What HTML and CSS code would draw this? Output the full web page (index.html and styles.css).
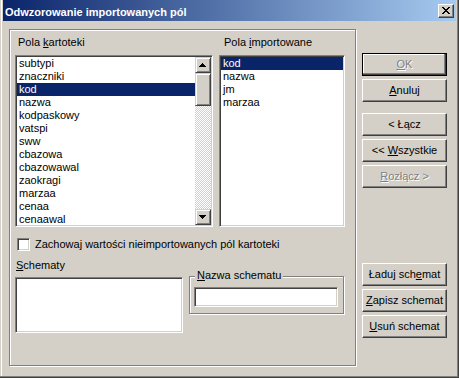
FILE: index.html
```html
<!DOCTYPE html>
<html lang="pl">
<head>
<meta charset="utf-8">
<title>Odwzorowanie importowanych pól</title>
<link rel="stylesheet" href="styles.css">
</head>
<body>
<div class="window">
  <div class="titlebar">
    <span class="title">Odwzorowanie importowanych pól</span>
    <div class="close" aria-label="Zamknij">
      <svg class="glyph" width="8" height="7" viewBox="0 0 8 7"><path d="M0 0h2v1H0zM6 0h2v1H6zM1 1h2v1H1zM5 1h2v1H5zM2 2h4v1H2zM3 3h2v1H3zM2 4h4v1H2zM1 5h2v1H1zM5 5h2v1H5zM0 6h2v1H0zM6 6h2v1H6z"/></svg>
    </div>
  </div>
  <div class="content">
    <div class="frame">
      <div class="lists">
        <div class="col col-left">
          <div class="label label-left">Pola <u>k</u>artoteki</div>
          <div class="listbox listbox-fields">
            <div class="items">
              <div class="item">subtypi</div>
              <div class="item">znaczniki</div>
              <div class="item selected">kod</div>
              <div class="item">nazwa</div>
              <div class="item">kodpaskowy</div>
              <div class="item">vatspi</div>
              <div class="item">sww</div>
              <div class="item">cbazowa</div>
              <div class="item">cbazowawal</div>
              <div class="item">zaokragi</div>
              <div class="item">marzaa</div>
              <div class="item">cenaa</div>
              <div class="item">cenaawal</div>
            </div>
            <div class="scrollbar">
              <div class="sb-btn">
                <svg class="glyph" width="7" height="4" viewBox="0 0 7 4"><path d="M3 0h1v1H3zM2 1h3v1H2zM1 2h5v1H1zM0 3h7v1H0z"/></svg>
              </div>
              <div class="sb-thumb"></div>
              <div class="sb-track"></div>
              <div class="sb-btn">
                <svg class="glyph" width="7" height="4" viewBox="0 0 7 4"><path d="M0 0h7v1H0zM1 1h5v1H1zM2 2h3v1H2zM3 3h1v1H3z"/></svg>
              </div>
            </div>
          </div>
        </div>
        <div class="col col-right">
          <div class="label label-right">Pola <u>i</u>mportowane</div>
          <div class="listbox listbox-imported">
            <div class="items">
              <div class="item selected">kod</div>
              <div class="item">nazwa</div>
              <div class="item">jm</div>
              <div class="item">marzaa</div>
            </div>
          </div>
        </div>
      </div>
      <div class="check-row">
        <span class="checkbox"></span>
        <span class="check-label">Zachowaj wartości nieimportowanych pól kartoteki</span>
      </div>
      <div class="schemes">
        <div class="schemes-left">
          <div class="label label-schemes"><u>S</u>chematy</div>
          <div class="listbox listbox-schemes"></div>
        </div>
        <div class="group">
          <span class="legend"><u>N</u>azwa schematu</span>
          <div class="edit"></div>
        </div>
      </div>
    </div>
    <div class="buttons">
      <div class="btn btn-default disabled"><u>O</u>K</div>
      <div class="btn gap-small"><u>A</u>nuluj</div>
      <div class="btn gap-mid">&lt; Łącz</div>
      <div class="btn gap-small">&lt;&lt; <u>W</u>szystkie</div>
      <div class="btn gap-small disabled"><u>R</u>ozłącz &gt;</div>
      <div class="btn gap-large">Ładuj sch<u>e</u>mat</div>
      <div class="btn gap-small"><u>Z</u>apisz schemat</div>
      <div class="btn gap-small"><u>U</u>suń schemat</div>
    </div>
  </div>
</div>
</body>
</html>
```

FILE: styles.css
```css
* {
  box-sizing: border-box;
}

html,
body {
  margin: 0;
  padding: 0;
}

body {
  width: 459px;
  height: 378px;
  overflow: hidden;
  background: #d4d0c8;
  font-family: "Liberation Sans", Arial, sans-serif;
  font-size: 11px;
  line-height: 13px;
  color: #000;
}

u {
  text-decoration: underline;
  text-underline-offset: 1px;
}

.glyph {
  display: block;
  fill: #000;
  shape-rendering: crispEdges;
}

/* window frame */
.window {
  width: 459px;
  height: 378px;
  padding: 0 3px 3px 3px;
  background: #d4d0c8;
  display: flex;
  flex-direction: column;
  box-shadow:
    inset -1px -1px 0 #404040,
    inset -2px -2px 0 #808080,
    inset 1px 0 0 #d4d0c8,
    inset 2px 0 0 #ffffff;
}

.titlebar {
  height: 21px;
  flex: none;
  display: flex;
  justify-content: space-between;
  align-items: flex-start;
  padding: 0 2px;
  background: linear-gradient(to right, #0a246a, #a6caf0);
}

.title {
  margin-top: 6px;
  color: #fff;
  font-weight: bold;
  white-space: nowrap;
}

.close {
  margin-top: 4px;
  width: 16px;
  height: 14px;
  padding: 2px 0 0 3px;
  background: #d4d0c8;
  border: 1px solid;
  border-color: #fff #404040 #404040 #fff;
  box-shadow: inset -1px -1px 0 #808080;
}

/* content */
.content {
  flex: 1;
  display: flex;
  align-items: flex-start;
  padding: 8px 0 0 6px;
}

.frame {
  width: 347px;
  height: 337px;
  flex: none;
  padding: 6px 0 0 5px;
  border: 1px solid #808080;
  box-shadow: inset 1px 1px 0 #fff, 1px 1px 0 #fff;
}

.lists {
  display: flex;
  align-items: flex-start;
}

.col-left {
  width: 198px;
}

.col-right {
  width: 126px;
  margin-left: 6px;
}

.label {
  white-space: nowrap;
}

.label-left {
  padding-left: 3px;
  margin-bottom: 6px;
}

.label-right {
  padding-left: 5px;
  margin-bottom: 6px;
}

.listbox {
  background: #fff;
  border: 1px solid;
  border-color: #808080 #fff #fff #808080;
  box-shadow: inset 1px 1px 0 #404040, inset -1px -1px 0 #d4d0c8;
  padding: 1px;
  overflow: hidden;
}

.listbox-fields {
  width: 198px;
  height: 172px;
  display: flex;
}

.listbox-imported {
  width: 126px;
  height: 172px;
}

.items {
  flex: 1;
  overflow: hidden;
  min-width: 0;
}

.item {
  height: 13px;
  padding-left: 2px;
  white-space: nowrap;
}

.item.selected {
  background: #0a246a;
  color: #fff;
}

/* scrollbar */
.scrollbar {
  width: 16px;
  flex: none;
  display: flex;
  flex-direction: column;
}

.sb-btn {
  width: 16px;
  height: 16px;
  flex: none;
  padding: 5px 0 0 3px;
  background: #d4d0c8;
  border: 1px solid;
  border-color: #d4d0c8 #404040 #404040 #d4d0c8;
  box-shadow: inset 1px 1px 0 #fff, inset -1px -1px 0 #808080;
}

.sb-thumb {
  width: 16px;
  height: 33px;
  flex: none;
  background: #d4d0c8;
  border: 1px solid;
  border-color: #d4d0c8 #404040 #404040 #d4d0c8;
  box-shadow: inset 1px 1px 0 #fff, inset -1px -1px 0 #808080;
}

.sb-track {
  flex: 1;
  background: repeating-conic-gradient(#ffffff 0 25%, #d4d0c8 0 50%) 0 0 / 2px 2px;
}

/* checkbox */
.check-row {
  display: flex;
  align-items: center;
  margin: 11px 0 0 2px;
  height: 13px;
}

.checkbox {
  width: 13px;
  height: 13px;
  flex: none;
  background: #fff;
  border: 1px solid;
  border-color: #808080 #fff #fff #808080;
  box-shadow: inset 1px 1px 0 #404040, inset -1px -1px 0 #d4d0c8;
}

.check-label {
  margin-left: 5px;
  white-space: nowrap;
}

/* schemes */
.schemes {
  display: flex;
  align-items: flex-start;
  margin-top: 8px;
}

.schemes-left {
  width: 168px;
}

.label-schemes {
  padding-left: 1px;
  margin-bottom: 5px;
}

.listbox-schemes {
  width: 168px;
  height: 56px;
}

.group {
  width: 155px;
  height: 38px;
  margin: 17px 0 0 6px;
  display: flex;
  flex-direction: column;
  align-items: flex-start;
  border: 1px solid #808080;
  box-shadow: inset 1px 1px 0 #fff, 1px 1px 0 #fff;
}

.legend {
  margin: -8px 0 0 5px;
  padding: 0 2px;
  background: #d4d0c8;
  white-space: nowrap;
}

.edit {
  width: 144px;
  height: 20px;
  margin: 5px 0 0 4px;
  background: #fff;
  border: 1px solid;
  border-color: #808080 #fff #fff #808080;
  box-shadow: inset 1px 1px 0 #404040, inset -1px -1px 0 #d4d0c8;
}

/* buttons */
.buttons {
  width: 85px;
  margin: 24px 0 0 6px;
  display: flex;
  flex-direction: column;
}

.btn {
  height: 23px;
  line-height: 21px;
  text-align: center;
  white-space: nowrap;
  background: #d4d0c8;
  border: 1px solid;
  border-color: #fff #404040 #404040 #fff;
  box-shadow: inset -1px -1px 0 #808080;
}

.btn-default {
  border-color: #000;
  box-shadow:
    inset -1px -1px 0 #404040,
    inset -2px -2px 0 #808080,
    inset 1px 1px 0 #fff;
}

.btn.disabled {
  color: #808080;
  text-shadow: 1px 1px 0 #fff;
}

.gap-small {
  margin-top: 3px;
}

.gap-mid {
  margin-top: 11px;
}

.gap-large {
  margin-top: 75px;
}
```
